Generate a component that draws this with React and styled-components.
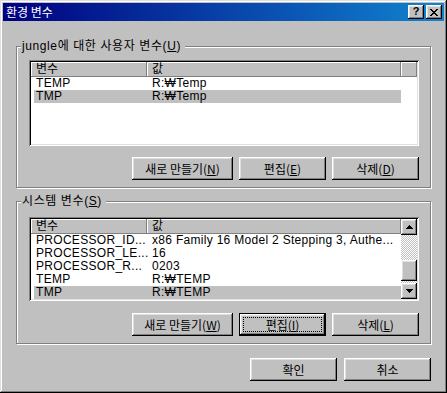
import React from 'react'
import styled, { createGlobalStyle } from 'styled-components'

const GlobalStyle = createGlobalStyle`
  html, body {
    margin: 0;
    padding: 0;
    background: #c0c0c0;
  }
  body {
    font-family: "Liberation Sans", "Noto Sans CJK KR", sans-serif;
    font-size: 12px;
    color: #000;
  }
`

const userVars = [
    { name: 'TEMP', value: 'R:₩Temp' },
    { name: 'TMP', value: 'R:₩Temp', selected: true },
]

const systemVars = [
    { name: 'PROCESSOR_ID...', value: 'x86 Family 16 Model 2 Stepping 3, Authe...' },
    { name: 'PROCESSOR_LE...', value: '16' },
    { name: 'PROCESSOR_R...', value: '0203' },
    { name: 'TEMP', value: 'R:₩TEMP' },
    { name: 'TMP', value: 'R:₩TEMP', selected: true },
    { name: 'windir', value: 'C:₩WINDOWS' },
]

function VarList({ rows, height, scroll }) {
    return (
        <List $height={height}>
            <ListContent>
                <Header>
                    <HeaderCell>변수</HeaderCell>
                    <HeaderCell>값</HeaderCell>
                    {!scroll && <HeaderCell />}
                </Header>
                {rows.map((r, i) => (
                    <Row key={i} $selected={r.selected}>
                        <Cell>{r.name}</Cell>
                        <Cell>{r.value}</Cell>
                    </Row>
                ))}
            </ListContent>
            {scroll && (
                <Scrollbar>
                    <ScrollButton>
                        <svg width="7" height="4" viewBox="0 0 7 4"><path d="M3 0h1v1h1v1h1v1h1v1H0V3h1V2h1V1h1z" fill="#000" /></svg>
                    </ScrollButton>
                    <Track>
                        <Thumb />
                    </Track>
                    <ScrollButton>
                        <svg width="7" height="4" viewBox="0 0 7 4"><path d="M0 0h7v1H6v1H5v1H4v1H3V3H2V2H1V1H0z" fill="#000" /></svg>
                    </ScrollButton>
                </Scrollbar>
            )}
        </List>
    )
}

function App() {
    return (
        <>
            <GlobalStyle />
            <Dialog>
                <TitleBar>
                    <Title>환경 변수</Title>
                    <TitleButtons>
                        <TitleButton><HelpMark>?</HelpMark></TitleButton>
                        <TitleButton>
                            <svg width="8" height="7" viewBox="0 0 8 7">
                                <path d="M0 0h2v1h1v1h2V1h1V0h2v1H7v1H6v1H5v1h1v1h1v1h1v1H6V6H5V5H3v1H2v1H0V6h1V5h1V4h1V3H2V2H1V1H0z" fill="#000" />
                            </svg>
                        </TitleButton>
                    </TitleButtons>
                </TitleBar>
                <Content>
                    <Group>
                        <Legend>jungle에 대한 사용자 변수(<u>U</u>)</Legend>
                        <ListWrap $gap={7}>
                            <VarList rows={userVars} height={86} />
                        </ListWrap>
                        <ButtonRow $gap={11}>
                            <Button $width={101}>새로 만들기(<u>N</u>)</Button>
                            <Button>편집(<u>E</u>)</Button>
                            <Button>삭제(<u>D</u>)</Button>
                        </ButtonRow>
                    </Group>
                    <Group $top={13}>
                        <Legend>시스템 변수(<u>S</u>)</Legend>
                        <ListWrap $gap={9}>
                            <VarList rows={systemVars} height={84} scroll />
                        </ListWrap>
                        <ButtonRow $gap={12}>
                            <Button $width={101}>새로 만들기(<u>W</u>)</Button>
                            <Button $default>편집(<u>I</u>)</Button>
                            <Button>삭제(<u>L</u>)</Button>
                        </ButtonRow>
                    </Group>
                    <Footer>
                        <Button>확인</Button>
                        <Button>취소</Button>
                    </Footer>
                </Content>
            </Dialog>
        </>
    )
}

const raised = `
    background: #c0c0c0;
    box-shadow: inset -1px -1px #000, inset 1px 1px #fff, inset -2px -2px #808080, inset 2px 2px #dfdfdf;
`

const Dialog = styled.div`
    width: 447px;
    height: 393px;
    box-sizing: border-box;
    padding: 3px;
    background: #c0c0c0;
    box-shadow: inset -1px -1px #000, inset 1px 1px #dfdfdf, inset -2px -2px #808080, inset 2px 2px #fff;
    display: flex;
    flex-direction: column;
`

const TitleBar = styled.div`
    height: 18px;
    display: flex;
    align-items: center;
    padding: 0 2px 0 2px;
    background: linear-gradient(to right, #000080, #1084d0);
`

const Title = styled.span`
    color: #fff;
    font-family: "Noto Sans CJK KR", sans-serif;
    font-size: 12px;
    line-height: 14px;
    margin-left: 1px;
`

const TitleButtons = styled.div`
    margin-left: auto;
    display: flex;
    gap: 2px;
`

const TitleButton = styled.div`
    width: 16px;
    height: 14px;
    ${raised}
    display: flex;
    align-items: center;
    justify-content: center;
`

const HelpMark = styled.span`
    font-weight: bold;
    font-size: 11px;
    line-height: 11px;
    margin-top: -1px;
`

const Content = styled.div`
    flex: 1;
    display: flex;
    flex-direction: column;
    padding: 25px 13px 0 13px;
`

const Group = styled.div`
    margin-top: ${p => p.$top || 0}px;
    border: 1px solid #808080;
    box-shadow: inset 1px 1px #fff, 1px 1px #fff;
    padding: 0 11px 7px 12px;
    display: flex;
    flex-direction: column;
`

const Legend = styled.div`
    align-self: flex-start;
    margin: -7px 0 0 -8px;
    padding: 0 4px 0 1px;
    height: 13px;
    line-height: 13px;
    letter-spacing: 0.6px;
    background: #c0c0c0;
    white-space: nowrap;
    u { text-underline-offset: 1px; }
`

const ListWrap = styled.div`
    margin-top: ${p => p.$gap}px;
`

const List = styled.div`
    height: ${p => p.$height}px;
    box-sizing: border-box;
    padding: 2px;
    background: #fff;
    box-shadow: inset 1px 1px #808080, inset -1px -1px #fff, inset 2px 2px #000, inset -2px -2px #dfdfdf;
    display: flex;
    overflow: hidden;
`

const ListContent = styled.div`
    flex: 1;
    overflow: hidden;
`

const Header = styled.div`
    display: grid;
    grid-template-columns: 116px 254px 1fr;
    height: 15px;
`

const HeaderCell = styled.div`
    background: #c0c0c0;
    box-shadow: inset -1px -1px #808080, inset 1px 1px #fff;
    padding-left: 5px;
    line-height: 15px;
    white-space: nowrap;
`

const Row = styled.div`
    display: grid;
    grid-template-columns: 116px 1fr;
    width: 367px;
    margin-left: 3px;
    height: 13px;
    line-height: 13px;
    background: ${p => p.$selected ? '#c0c0c0' : 'transparent'};
`

const Cell = styled.div`
    padding-left: 2px;
    letter-spacing: 0.3px;
    white-space: nowrap;
    overflow: hidden;
`

const Scrollbar = styled.div`
    width: 16px;
    display: flex;
    flex-direction: column;
`

const ScrollButton = styled.div`
    width: 16px;
    height: 16px;
    ${raised}
    display: flex;
    align-items: center;
    justify-content: center;
`

const Track = styled.div`
    flex: 1;
    background: repeating-conic-gradient(#c0c0c0 0 25%, #fff 0 50%) 0 0 / 2px 2px;
`

const Thumb = styled.div`
    height: 21px;
    margin-top: 25px;
    ${raised}
`

const ButtonRow = styled.div`
    margin-top: ${p => p.$gap}px;
    display: flex;
    justify-content: flex-end;
    gap: 6px;
`

const Button = styled.div`
    position: relative;
    width: ${p => p.$width || 87}px;
    height: 23px;
    box-sizing: border-box;
    display: flex;
    align-items: center;
    justify-content: center;
    font-family: "Noto Sans CJK KR", sans-serif;
    font-size: 12px;
    line-height: 14px;
    background: #c0c0c0;
    box-shadow: ${p => p.$default
        ? 'inset 0 0 0 1px #000, inset -2px -2px #000, inset 2px 2px #fff, inset -3px -3px #808080, inset 3px 3px #dfdfdf'
        : 'inset -1px -1px #000, inset 1px 1px #fff, inset -2px -2px #808080, inset 2px 2px #dfdfdf'};
    &::after {
        content: '';
        display: ${p => p.$default ? 'block' : 'none'};
        position: absolute;
        inset: 4px;
        border: 1px dotted #000;
    }
`

const Footer = styled.div`
    margin-top: 14px;
    display: flex;
    justify-content: flex-end;
    gap: 7px;
`

export default App
